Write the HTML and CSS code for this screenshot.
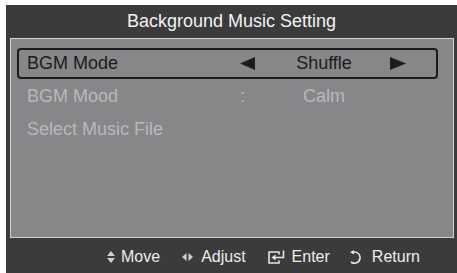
FILE: index.html
```html
<!DOCTYPE html>
<html>
<head>
<meta charset="utf-8">
<link rel="stylesheet" href="styles.css">
</head>
<body>
<div class="osd">
  <div class="title">Background Music Setting</div>
  <div class="menu">
    <div class="row selected">
      <span class="label">BGM Mode</span>
      <span class="arrow"><svg width="15" height="13" viewBox="0 0 15 13"><polygon points="0,6.5 15,0 15,13" fill="#1c1c1c"/></svg></span>
      <span class="value">Shuffle</span>
      <span class="arrow"><svg width="16" height="13" viewBox="0 0 16 13"><polygon points="16,6.5 0,0 0,13" fill="#1c1c1c"/></svg></span>
    </div>
    <div class="row disabled">
      <span class="label">BGM Mood</span>
      <span class="arrow sep">:</span>
      <span class="value">Calm</span>
    </div>
    <div class="row disabled">
      <span class="label">Select Music File</span>
    </div>
  </div>
  <div class="footer">
    <span class="key k-move"><svg class="ico" width="8" height="12" viewBox="0 0 8 12"><polygon points="4,0 8,5 0,5" fill="#cfcfcf"/><polygon points="0,7 8,7 4,12" fill="#cfcfcf"/></svg>Move</span>
    <span class="key k-adjust"><svg class="ico" width="11" height="8" viewBox="0 0 11 8"><polygon points="0,4 4.5,0 4.5,8" fill="#cfcfcf"/><polygon points="11,4 6.5,0 6.5,8" fill="#cfcfcf"/></svg>Adjust</span>
    <span class="key k-enter"><svg class="ico" width="17" height="14" viewBox="0 0 17 14"><path d="M11 4.5 V2 H1 V13 H11 V10.5" fill="none" stroke="#e6e6e6" stroke-width="1.6"/><path d="M15.5 0.5 V7.5 H7" fill="none" stroke="#e6e6e6" stroke-width="1.6"/><polygon points="3.5,7.5 7.5,4.5 7.5,10.5" fill="#e6e6e6"/></svg>Enter</span>
    <span class="key k-return"><svg class="ico" width="13" height="14" viewBox="0 0 13 14"><path d="M4 2.2 A5.6 5.6 0 1 1 2 12" fill="none" stroke="#e6e6e6" stroke-width="1.6"/><polygon points="1,2.2 5,0 5,4.6" fill="#e6e6e6"/></svg>Return</span>
  </div>
</div>
</body>
</html>
```
FILE: styles.css
```css
body {
  margin: 0;
  background: #ffffff;
  font-family: "Liberation Sans", Arial, Helvetica, sans-serif;
}

.osd {
  margin: 5px 0 0 6px;
  width: 451px;
  height: 268px;
  background: #3b3b3b;
  display: flex;
  flex-direction: column;
}

.title {
  height: 33px;
  display: flex;
  align-items: center;
  justify-content: center;
  color: #f2f2f2;
  font-size: 18px;
}

.menu {
  margin: 0 3px 0 4px;
  height: 200px;
  box-sizing: border-box;
  border: 1px solid #d2d2d4;
  background: #87878a;
  padding: 9px 0 0 6px;
  display: flex;
  flex-direction: column;
  gap: 2px;
}

.row {
  height: 31px;
  width: 421px;
  box-sizing: border-box;
  border: 2px solid transparent;
  border-radius: 4px;
  padding-left: 8px;
  display: flex;
  align-items: center;
  font-size: 18px;
  white-space: nowrap;
}

.row.selected {
  border-color: #1c1c1c;
  color: #1c1c1c;
}

.row.disabled {
  color: #b8b8bb;
}

.label {
  width: 213px;
}

.arrow {
  width: 18px;
  display: flex;
  align-items: center;
}

.value {
  width: 132px;
  text-align: center;
}

.footer {
  flex: 1;
  display: flex;
  align-items: center;
  padding-left: 101px;
  padding-top: 2px;
  color: #ededed;
  font-size: 16px;
}

.key {
  display: flex;
  align-items: center;
}

.ico {
  display: block;
}

.k-move .ico { margin-right: 6px; }
.k-adjust { margin-left: 22px; }
.k-adjust .ico { margin-right: 8px; }
.k-enter { margin-left: 22px; }
.k-enter .ico { margin-right: 7px; }
.k-return { margin-left: 19px; }
.k-return .ico { margin-right: 10px; }
```
